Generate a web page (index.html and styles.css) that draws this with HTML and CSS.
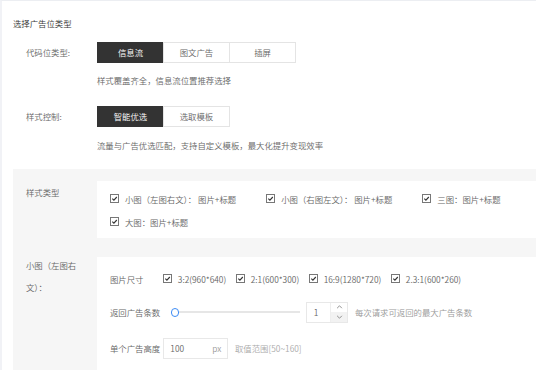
FILE: index.html
```html
<!DOCTYPE html>
<html lang="zh-CN">
<head>
<meta charset="utf-8">
<title>选择广告位类型</title>
<link rel="stylesheet" href="styles.css">
</head>
<body>
<div class="page">
  <div class="title">选择广告位类型</div>

  <div class="row row-first">
    <div class="label">代码位类型:</div>
    <div class="seg">
      <div class="seg-btn active">信息流</div>
      <div class="seg-btn">图文广告</div>
      <div class="seg-btn">插屏</div>
    </div>
  </div>
  <div class="desc desc-first">样式覆盖齐全，信息流位置推荐选择</div>

  <div class="row row-second">
    <div class="label">样式控制:</div>
    <div class="seg">
      <div class="seg-btn active">智能优选</div>
      <div class="seg-btn">选取模板</div>
    </div>
  </div>
  <div class="desc desc-second">流量与广告优选匹配，支持自定义模板，最大化提升变现效率</div>

  <div class="panel">
    <div class="prow">
      <div class="plabel plabel-one">样式类型</div>
      <div class="pbox pbox-types">
        <label class="cb-item"><svg class="cb" viewBox="0 0 9 9" width="9" height="9"><rect x="0.5" y="0.5" width="8" height="8" fill="#fff" stroke="#777"/><path d="M2.3 4.6 L3.9 6.1 L6.8 3" fill="none" stroke="#333" stroke-width="1.1"/></svg><span>小图（左图右文）： 图片+标题</span></label>
        <label class="cb-item"><svg class="cb" viewBox="0 0 9 9" width="9" height="9"><rect x="0.5" y="0.5" width="8" height="8" fill="#fff" stroke="#777"/><path d="M2.3 4.6 L3.9 6.1 L6.8 3" fill="none" stroke="#333" stroke-width="1.1"/></svg><span>小图（右图左文）： 图片+标题</span></label>
        <label class="cb-item"><svg class="cb" viewBox="0 0 9 9" width="9" height="9"><rect x="0.5" y="0.5" width="8" height="8" fill="#fff" stroke="#777"/><path d="M2.3 4.6 L3.9 6.1 L6.8 3" fill="none" stroke="#333" stroke-width="1.1"/></svg><span>三图：图片+标题</span></label>
        <label class="cb-item"><svg class="cb" viewBox="0 0 9 9" width="9" height="9"><rect x="0.5" y="0.5" width="8" height="8" fill="#fff" stroke="#777"/><path d="M2.3 4.6 L3.9 6.1 L6.8 3" fill="none" stroke="#333" stroke-width="1.1"/></svg><span>大图：图片+标题</span></label>
      </div>
    </div>

    <div class="prow prow-two">
      <div class="plabel plabel-two">小图（左图右文）：</div>
      <div class="pbox pbox-detail">
        <div class="drow drow-size">
          <div class="dlabel">图片尺寸</div>
          <label class="cb-item small"><svg class="cb" viewBox="0 0 9 9" width="9" height="9"><rect x="0.5" y="0.5" width="8" height="8" fill="#fff" stroke="#777"/><path d="M2.3 4.6 L3.9 6.1 L6.8 3" fill="none" stroke="#333" stroke-width="1.1"/></svg><span>3:2(960*640)</span></label>
          <label class="cb-item small"><svg class="cb" viewBox="0 0 9 9" width="9" height="9"><rect x="0.5" y="0.5" width="8" height="8" fill="#fff" stroke="#777"/><path d="M2.3 4.6 L3.9 6.1 L6.8 3" fill="none" stroke="#333" stroke-width="1.1"/></svg><span>2:1(600*300)</span></label>
          <label class="cb-item small"><svg class="cb" viewBox="0 0 9 9" width="9" height="9"><rect x="0.5" y="0.5" width="8" height="8" fill="#fff" stroke="#777"/><path d="M2.3 4.6 L3.9 6.1 L6.8 3" fill="none" stroke="#333" stroke-width="1.1"/></svg><span>16:9(1280*720)</span></label>
          <label class="cb-item small"><svg class="cb" viewBox="0 0 9 9" width="9" height="9"><rect x="0.5" y="0.5" width="8" height="8" fill="#fff" stroke="#777"/><path d="M2.3 4.6 L3.9 6.1 L6.8 3" fill="none" stroke="#333" stroke-width="1.1"/></svg><span>2.3:1(600*260)</span></label>
        </div>

        <div class="drow drow-count">
          <div class="dlabel">返回广告条数</div>
          <div class="slider">
            <div class="slider-handle"></div>
            <div class="slider-track"></div>
          </div>
          <div class="num-input">
            <div class="num-value">1</div>
            <div class="num-spin">
              <div class="spin-up"><svg viewBox="0 0 8 5" width="7" height="4"><path d="M1 4 L4 1 L7 4" fill="none" stroke="#777" stroke-width="1"/></svg></div>
              <div class="spin-down"><svg viewBox="0 0 8 5" width="7" height="4"><path d="M1 1 L4 4 L7 1" fill="none" stroke="#777" stroke-width="1"/></svg></div>
            </div>
          </div>
          <div class="hint">每次请求可返回的最大广告条数</div>
        </div>

        <div class="drow drow-height">
          <div class="dlabel">单个广告高度</div>
          <div class="px-input">
            <span class="px-value">100</span>
            <span class="px-unit">px</span>
          </div>
          <div class="hint hint-range">取值范围[50~160]</div>
        </div>
      </div>
    </div>
  </div>
</div>
</body>
</html>
```

FILE: styles.css
```css
* {
  box-sizing: border-box;
}

html, body {
  margin: 0;
  padding: 0;
  background: #fff;
}

body {
  font-family: "Noto Sans CJK SC", "Noto Sans", sans-serif;
  font-size: 8.4px;
  font-weight: 350;
  color: #666;
  line-height: 12px;
}

.page {
  border-left: 2px solid #f1f2f6;
  border-top: 1px solid #eceef2;
  padding: 16px 0 0 11px;
}

.title {
  color: #333;
  height: 12px;
}

.row {
  display: flex;
  align-items: center;
  height: 21px;
}

.row-first {
  margin-top: 12.5px;
}

.row-second {
  margin-top: 19.7px;
}

.label {
  width: 84px;
  padding-left: 13px;
  color: #666;
}

.seg {
  display: flex;
  height: 21px;
}

.seg-btn {
  width: 67px;
  height: 21px;
  line-height: 19px;
  text-align: center;
  border: 1px solid #e4e4e4;
  margin-left: -1px;
  color: #666;
  background: #fff;
}

.seg-btn:first-child {
  margin-left: 0;
}

.seg-btn.active {
  background: #333;
  border-color: #333;
  color: #fff;
}

.desc {
  margin-left: 84px;
  color: #666;
  height: 12px;
}

.desc-first {
  margin-top: 11.5px;
}

.desc-second {
  margin-top: 12.3px;
}

.panel {
  margin-top: 18px;
  background: #f6f6f6;
  padding-top: 12px;
}

.prow {
  display: flex;
  align-items: flex-start;
}

.prow-two {
  margin-top: 19.3px;
}

.plabel {
  width: 84px;
  padding: 0 16px 0 13px;
  color: #666;
  flex-shrink: 0;
}

.plabel-one {
  padding-top: 5px;
}

.plabel-two {
  line-height: 21.7px;
  margin-top: -2px;
}

.pbox {
  flex: 1;
  background: #fff;
}

.pbox-types {
  display: flex;
  flex-wrap: wrap;
  column-gap: 30px;
  padding: 6.6px 0 4.6px 13px;
}

.cb-item {
  display: inline-flex;
  align-items: center;
  height: 22.7px;
  color: #666;
}

.cb {
  display: block;
  margin-right: 6px;
  flex-shrink: 0;
}

.cb-item.small {
  height: 22px;
  margin-right: 10px;
}

.cb-item.small .cb {
  margin-right: 5.5px;
}

.pbox-detail {
  padding: 11px 0 10.7px 13px;
}

.drow {
  display: flex;
  align-items: center;
}

.drow-size {
  height: 22px;
}

.drow-count {
  margin-top: 11.7px;
  height: 21.7px;
}

.drow-height {
  margin-top: 14.3px;
  height: 21.3px;
}

.dlabel {
  width: 53.3px;
  flex-shrink: 0;
  color: #666;
}

.slider {
  display: flex;
  align-items: center;
  width: 137px;
  padding-left: 7.5px;
}

.slider-handle {
  width: 8.5px;
  height: 8.5px;
  border-radius: 50%;
  border: 1.5px solid #3d8cf5;
  background: #fff;
  flex-shrink: 0;
}

.slider-track {
  flex: 1;
  height: 2px;
  background: #e6e6e6;
}

.num-input {
  display: flex;
  width: 41.7px;
  height: 21.7px;
  border: 1px solid #e8e8e8;
  margin-left: 6px;
}

.num-value {
  flex: 1;
  padding-left: 6.5px;
  line-height: 19.7px;
  color: #666;
}

.num-spin {
  width: 16.7px;
  border-left: 1px solid #eeeeee;
  display: flex;
  flex-direction: column;
}

.spin-up,
.spin-down {
  flex: 1;
  display: flex;
  align-items: center;
  justify-content: center;
}

.spin-down {
  background: #f2f2f2;
}

.spin-up svg,
.spin-down svg {
  display: block;
}

.hint {
  margin-left: 7px;
  color: #999;
}

.hint-range {
  margin-left: 6.7px;
  color: #aaa;
}

.px-input {
  display: flex;
  align-items: center;
  justify-content: space-between;
  width: 65px;
  height: 21.3px;
  border: 1px solid #e8e8e8;
  padding: 0 6px 0 6px;
}

.px-value {
  color: #666;
}

.px-unit {
  color: #999;
}
```
